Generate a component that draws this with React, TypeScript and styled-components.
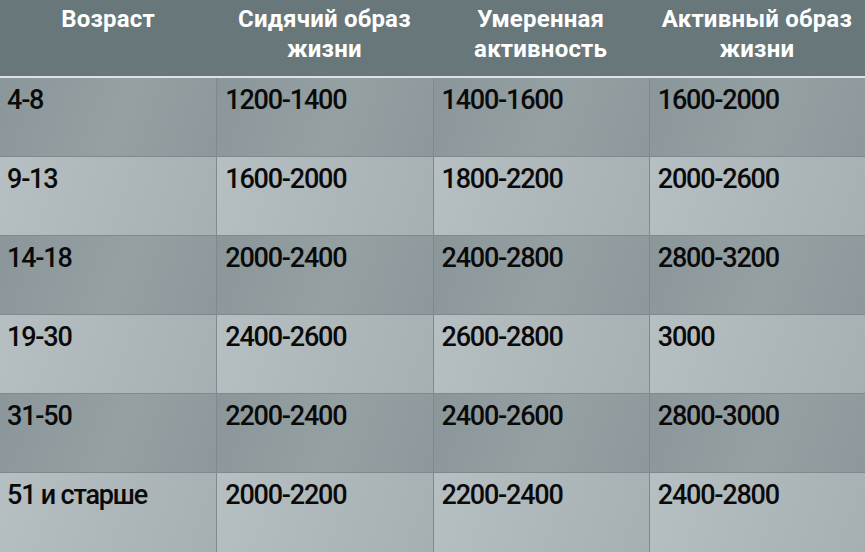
import React from "react";
import styled, { createGlobalStyle } from "styled-components";

const GlobalStyle = createGlobalStyle`
  html, body { margin: 0; padding: 0; background: #a9b2b5; }
  body { font-family: Roboto, "DejaVu Sans", sans-serif; }
`;

const Table = styled.div`
  width: 865px;
  display: grid;
  grid-template-columns: repeat(4, 1fr);
`;

const HeadCell = styled.div`
  height: 78px;
  box-sizing: border-box;
  padding: 4px 6px 0;
  background: #67777a;
  border-bottom: 2px solid #dde3e4;
  color: #ffffff;
  font-weight: 700;
  font-size: 24px;
  line-height: 30px;
  text-align: center;
  letter-spacing: 0.2px;
`;

const Cell = styled.div<{ $dark: boolean; $first: boolean; $last: boolean }>`
  height: 79px;
  box-sizing: border-box;
  padding: 7px 8px 0 ${(p) => (p.$first ? "7px" : "8px")};
  border-left: ${(p) => (p.$first ? "none" : "1px solid #7d8b8e")};
  border-bottom: ${(p) => (p.$last ? "none" : "1px solid #7d8b8e")};
  background: ${(p) =>
    p.$dark
      ? "linear-gradient(110deg, #8a9699 0%, #95a0a3 55%, #8c989b 100%)"
      : "linear-gradient(110deg, #b6bfc2 0%, #adb6b9 55%, #a6afb2 100%)"};
  color: #0a0a0a;
  font-size: 27px;
  font-weight: 500;
  line-height: 30px;
  letter-spacing: -1.2px;
  white-space: nowrap;
`;

const headers = [
  ["Возраст"],
  ["Сидячий образ", "жизни"],
  ["Умеренная", "активность"],
  ["Активный образ", "жизни"],
];

const rows = [
  ["4-8", "1200-1400", "1400-1600", "1600-2000"],
  ["9-13", "1600-2000", "1800-2200", "2000-2600"],
  ["14-18", "2000-2400", "2400-2800", "2800-3200"],
  ["19-30", "2400-2600", "2600-2800", "3000"],
  ["31-50", "2200-2400", "2400-2600", "2800-3000"],
  ["51 и старше", "2000-2200", "2200-2400", "2400-2800"],
];

export default function App() {
  return (
    <>
      <GlobalStyle />
      <Table>
        {headers.map((lines, i) => (
          <HeadCell key={i}>
            {lines.map((l, j) => (
              <div key={j}>{l}</div>
            ))}
          </HeadCell>
        ))}
        {rows.map((r, ri) =>
          r.map((v, ci) => (
            <Cell
              key={`${ri}-${ci}`}
              $dark={ri % 2 === 0}
              $first={ci === 0}
              $last={ri === rows.length - 1}
            >
              {v}
            </Cell>
          ))
        )}
      </Table>
    </>
  );
}
